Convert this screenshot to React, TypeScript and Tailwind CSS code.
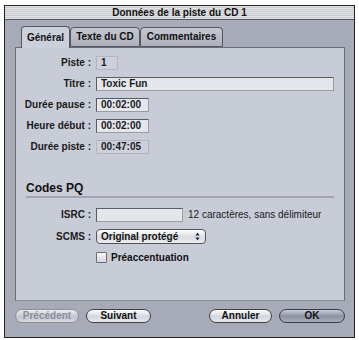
import React from "react";

const font = { fontFamily: '"Liberation Sans", Arial, sans-serif' };

function Label({ children }: { children: React.ReactNode }) {
  return <div className="text-right text-[10px] font-bold text-[#1a1a1a] pr-[5px] leading-none">{children}</div>;
}

function Field({ w, children, ro }: { w: string; children?: React.ReactNode; ro?: boolean }) {
  return (
    <div
      className={
        (ro
          ? "bg-[#cdd0da] border border-[#b3b6c0] "
          : "bg-[#e4e6ec] border border-[#5a5c63] border-b-[#9a9ca3] border-r-[#9a9ca3] ") +
        w +
        " h-[14px] flex items-center pl-[4px] text-[10px] font-bold text-[#1a1a1a] leading-none"
      }
    >
      {children}
    </div>
  );
}

function Btn({ label, w, disabled, def }: { label: string; w: string; disabled?: boolean; def?: boolean }) {
  return (
    <div
      className={
        w +
        " h-[14px] rounded-full flex items-center justify-center text-[10px] font-bold leading-none border " +
        (def
          ? "border-[#3a3d47] bg-[linear-gradient(to_bottom,#c9ccd6,#8e93a3_50%,#a7acbb)] text-[#111]"
          : disabled
          ? "border-[#8d909a] bg-[linear-gradient(to_bottom,#eceef2,#c4c7cf_55%,#d6d8de)] text-[#8b8e98]"
          : "border-[#3e4048] bg-[linear-gradient(to_bottom,#ffffff,#d3d6de_55%,#e8eaef)] text-[#111]")
      }
    >
      {label}
    </div>
  );
}

export default function App() {
  return (
    <div className="w-[359px] h-[340px] bg-white pt-[5px] pl-[4px]" style={font}>
      <div className="w-[351px] h-[333px] border border-[#222] bg-[#a7aab7] flex flex-col">
        <div className="h-[14px] border-b border-[#55575e] bg-[repeating-linear-gradient(to_bottom,#e2e3e6_0px,#e2e3e6_1px,#c9cace_1px,#c9cace_2px)] flex items-center justify-center text-[10px] font-bold text-[#111] leading-none">
          Données de la piste du CD 1
        </div>
        <div className="pl-[10px] pt-[6px]">
          <div className="flex pl-[6px] h-[21px] relative z-10">
            <div className="w-[49px] h-[22px] border border-[#55575e] border-b-0 rounded-t-[4px] bg-[#ccd0da] flex items-center justify-center text-[10px] font-bold text-[#111] leading-none">
              Général
            </div>
            <div className="w-[70px] h-[20px] mt-[1px] border border-[#55575e] rounded-t-[4px] bg-[linear-gradient(to_bottom,#c4c7d0,#aeb1bb)] flex items-center justify-center text-[10px] font-bold text-[#111] leading-none">
              Texte du CD
            </div>
            <div className="w-[83px] h-[20px] mt-[1px] border border-[#55575e] rounded-t-[4px] bg-[linear-gradient(to_bottom,#c4c7d0,#aeb1bb)] flex items-center justify-center text-[10px] font-bold text-[#111] leading-none">
              Commentaires
            </div>
          </div>
          <div className="w-[330px] h-[254px] border border-[#6a6d76] border-b-[#8c8f98] bg-[#c8ccd7] pt-[8px]">
            <div className="grid grid-cols-[80px_1fr] items-center gap-y-[7px]">
              <Label>Piste :</Label>
              <div><Field w="w-[22px]" ro>1</Field></div>
              <Label>Titre :</Label>
              <div><Field w="w-[238px]">Toxic Fun</Field></div>
              <Label>Durée pause :</Label>
              <div><Field w="w-[53px]">00:02:00</Field></div>
              <Label>Heure début :</Label>
              <div><Field w="w-[53px]">00:02:00</Field></div>
              <Label>Durée piste :</Label>
              <div><Field w="w-[53px]" ro>00:47:05</Field></div>
            </div>
            <div className="mt-[28px] ml-[10px] w-[308px] border-b-2 border-[#a3a6b0] pb-[2px] text-[12px] font-bold text-[#111] leading-none">
              Codes PQ
            </div>
            <div className="grid grid-cols-[80px_1fr] items-center gap-y-[7px] mt-[10px]">
              <Label>ISRC :</Label>
              <div className="flex items-center gap-[5px]">
                <Field w="w-[87px]" />
                <span className="text-[10px] text-[#1a1a1a] leading-none">12 caractères, sans délimiteur</span>
              </div>
              <Label>SCMS :</Label>
              <div>
                <div className="w-[110px] h-[15px] rounded-[4px] border border-[#50535b] bg-[linear-gradient(to_bottom,#ffffff,#d9dbe1_55%,#eceef2)] flex items-center justify-between pl-[4px] pr-[5px] text-[10px] font-bold text-[#111] leading-none">
                  <span>Original protégé</span>
                  <svg width="5" height="9" viewBox="0 0 5 9">
                    <path d="M0.5 3.5 L2.5 0.5 L4.5 3.5 Z" fill="#222" />
                    <path d="M0.5 5.5 L2.5 8.5 L4.5 5.5 Z" fill="#222" />
                  </svg>
                </div>
              </div>
              <div />
              <div className="flex items-center gap-[4px] mt-[1px]">
                <div className="w-[11px] h-[11px] border border-[#6a6d76] bg-[linear-gradient(to_bottom,#f4f5f8,#d6d8de)] rounded-[1px]" />
                <span className="text-[10px] font-bold text-[#111] leading-none">Préaccentuation</span>
              </div>
            </div>
          </div>
          <div className="flex items-center w-[330px] mt-[8px]">
            <Btn label="Précédent" w="w-[64px]" disabled />
            <div className="w-[7px]" />
            <Btn label="Suivant" w="w-[65px]" />
            <div className="flex-1" />
            <Btn label="Annuler" w="w-[63px]" />
            <div className="w-[7px]" />
            <Btn label="OK" w="w-[66px]" def />
          </div>
        </div>
      </div>
    </div>
  );
}
